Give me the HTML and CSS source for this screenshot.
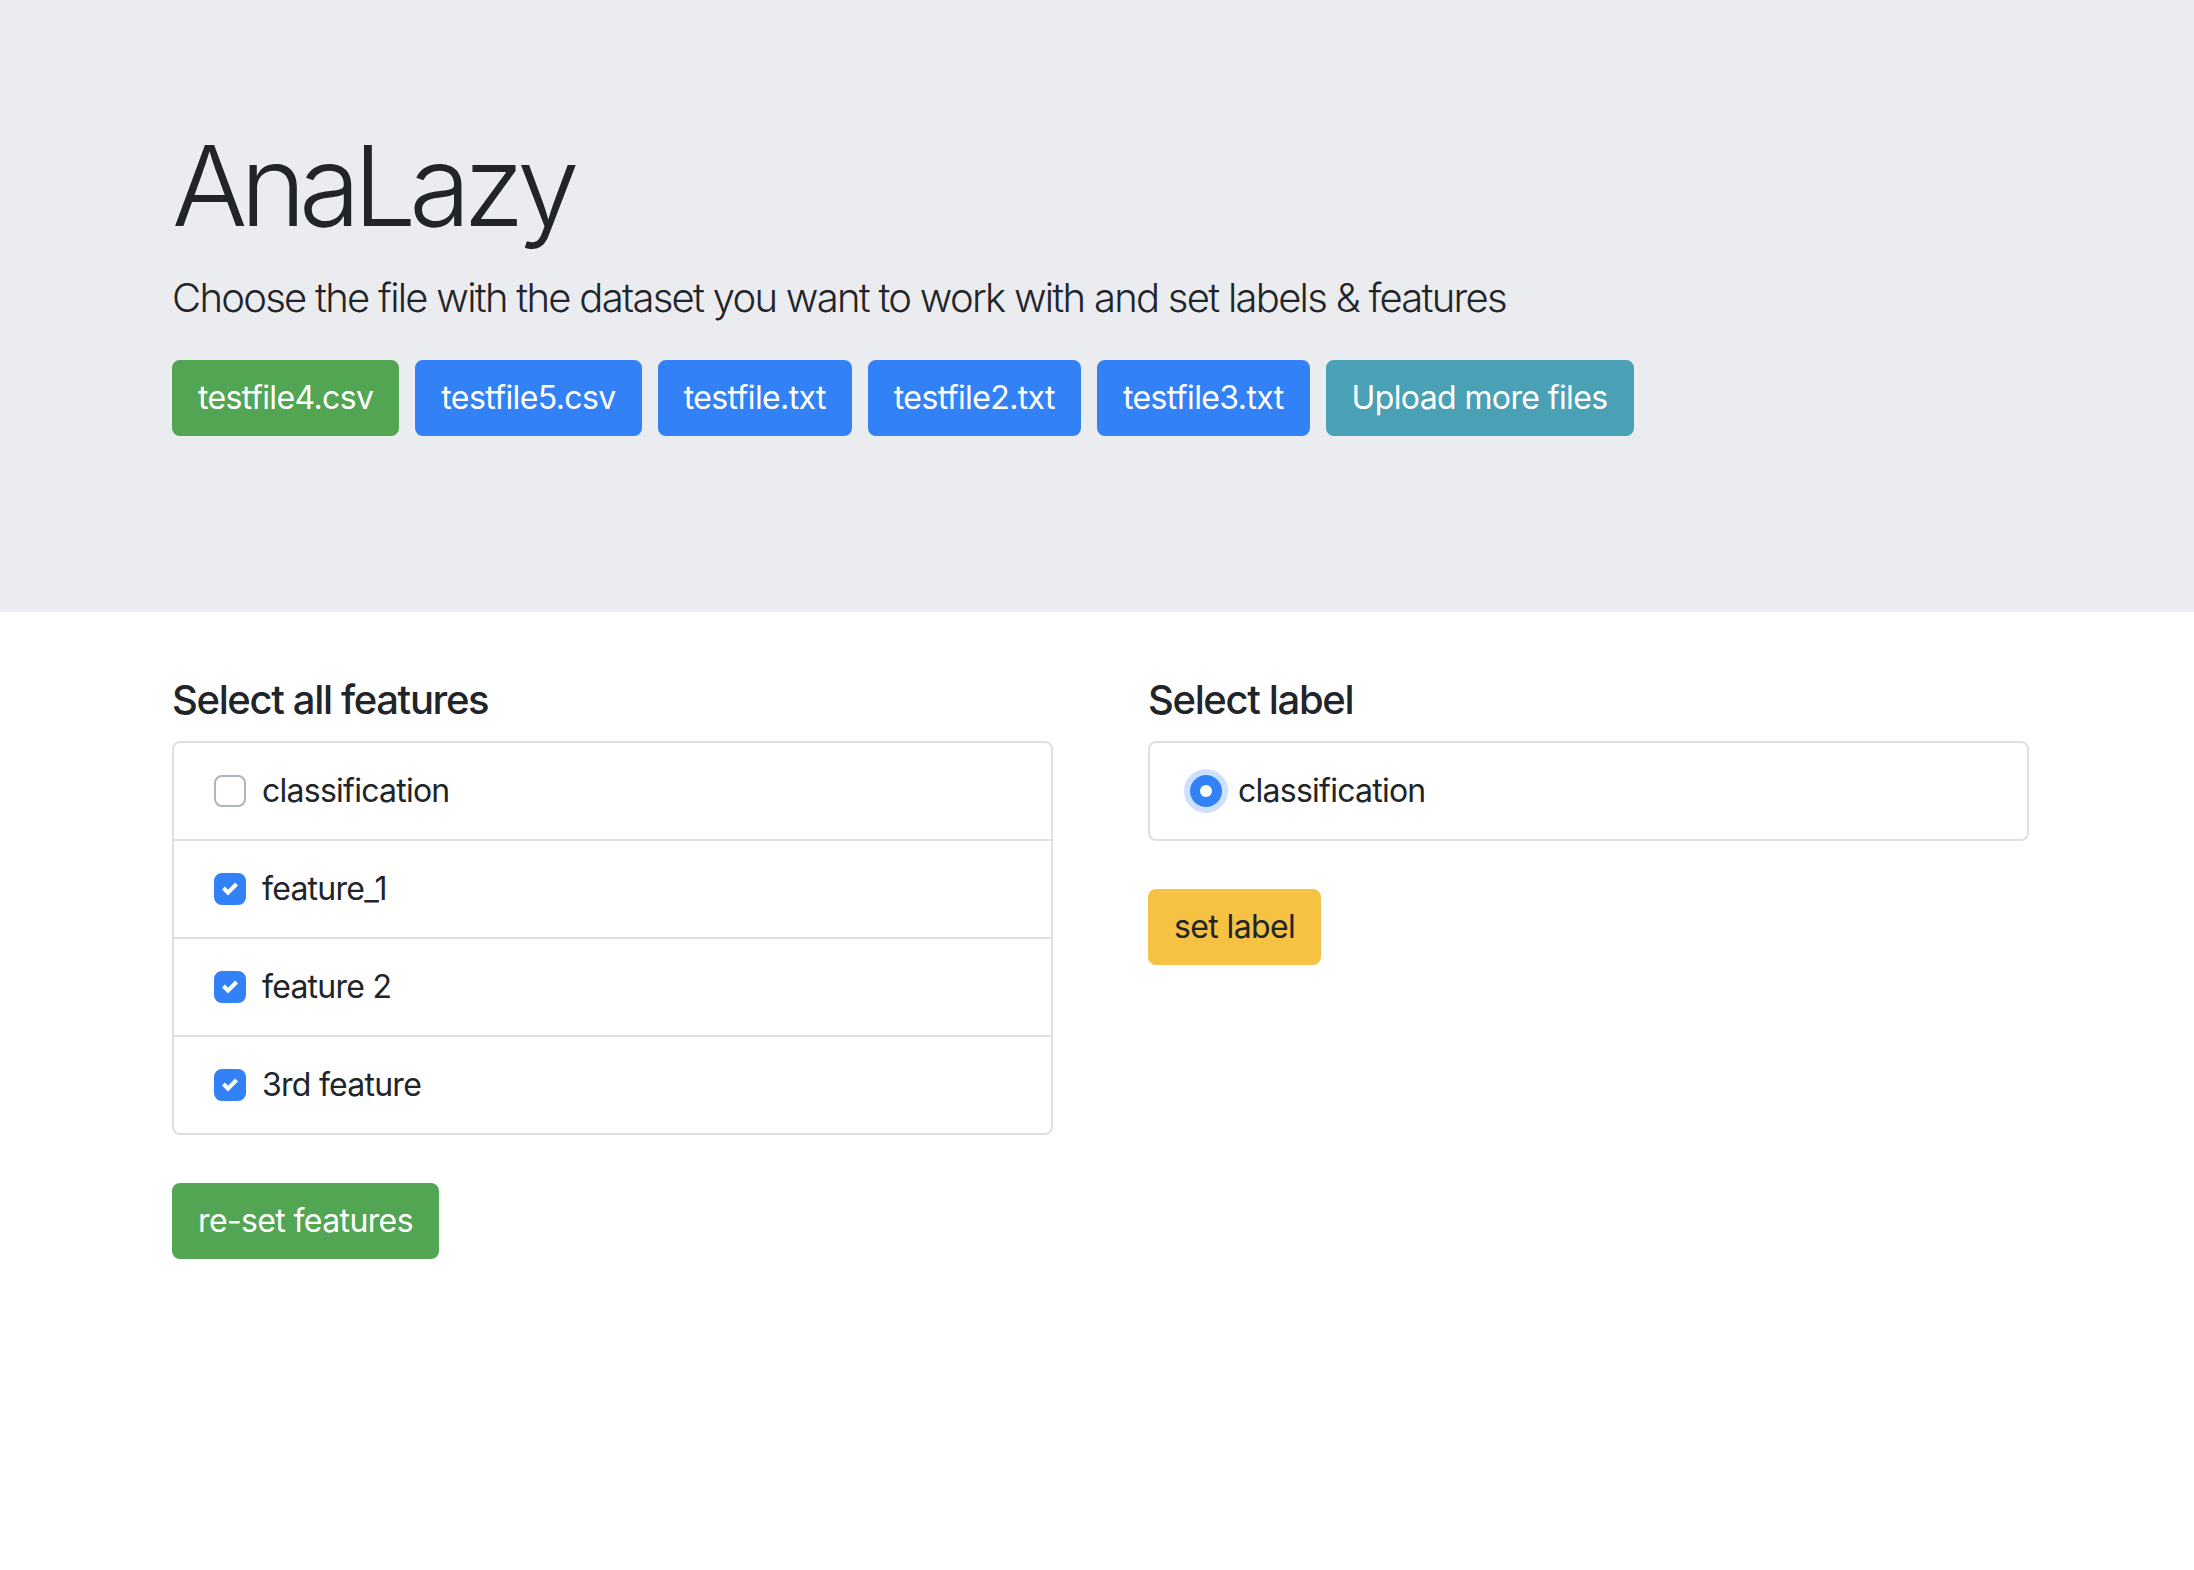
FILE: index.html
```html
<!DOCTYPE html>
<html lang="en">
<head>
<meta charset="utf-8">
<title>AnaLazy</title>
<link rel="stylesheet" href="styles.css">
</head>
<body>
<header class="jumbotron">
  <div class="container">
    <h1 class="display">AnaLazy</h1>
    <p class="lead">Choose the file with the dataset you want to work with and set labels &amp; features</p>
    <div class="file-buttons">
      <button class="btn btn-success">testfile4.csv</button>
      <button class="btn btn-primary">testfile5.csv</button>
      <button class="btn btn-primary">testfile.txt</button>
      <button class="btn btn-primary">testfile2.txt</button>
      <button class="btn btn-primary">testfile3.txt</button>
      <button class="btn btn-info">Upload more files</button>
    </div>
  </div>
</header>
<main class="container">
  <div class="columns">
    <section class="col">
      <h5 class="section-title">Select all features</h5>
      <ul class="list-group">
        <li class="list-item">
          <label class="control"><span class="checkbox"></span><span>classification</span></label>
        </li>
        <li class="list-item">
          <label class="control"><span class="checkbox checked"><svg viewBox="0 0 8 8" width="16" height="16"><path fill="#fff" d="M6.564.75l-3.59 3.612-1.538-1.55L0 4.26 2.974 7.25 8 2.193z"/></svg></span><span>feature_1</span></label>
        </li>
        <li class="list-item">
          <label class="control"><span class="checkbox checked"><svg viewBox="0 0 8 8" width="16" height="16"><path fill="#fff" d="M6.564.75l-3.59 3.612-1.538-1.55L0 4.26 2.974 7.25 8 2.193z"/></svg></span><span>feature 2</span></label>
        </li>
        <li class="list-item">
          <label class="control"><span class="checkbox checked"><svg viewBox="0 0 8 8" width="16" height="16"><path fill="#fff" d="M6.564.75l-3.59 3.612-1.538-1.55L0 4.26 2.974 7.25 8 2.193z"/></svg></span><span>3rd feature</span></label>
        </li>
      </ul>
      <button class="btn btn-success">re-set features</button>
    </section>
    <section class="col">
      <h5 class="section-title">Select label</h5>
      <ul class="list-group">
        <li class="list-item">
          <label class="control"><span class="radio"><span class="dot"></span></span><span>classification</span></label>
        </li>
      </ul>
      <button class="btn btn-warning">set label</button>
    </section>
  </div>
</main>
</body>
</html>
```
FILE: styles.css
```css
* {
  box-sizing: border-box;
}

html, body {
  margin: 0;
  padding: 0;
  background: #ffffff;
}

body {
  font-family: Inter, "Noto Sans", "Liberation Sans", sans-serif;
  font-size: 32px;
  line-height: 48px;
  letter-spacing: -0.75px;
  color: #212529;
}

.container {
  width: 1850px;
  margin: 0 auto;
}

.jumbotron {
  background: #ebecf0;
  padding: 118px 0 176px;
  margin-bottom: 64px;
}

.display {
  font-size: 112px;
  font-weight: 300;
  line-height: 134px;
  margin: 0 0 16px;
  letter-spacing: -7.2px;
}

.lead {
  font-size: 40px;
  font-weight: 300;
  line-height: 60px;
  margin: 0 0 32px;
  letter-spacing: -1.73px;
}

.file-buttons {
  display: flex;
  gap: 16px;
}

.btn {
  font-family: inherit;
  font-size: 32px;
  line-height: 48px;
  font-weight: 400;
  letter-spacing: -0.62px;
  padding: 12px 24px;
  border: 2px solid transparent;
  border-radius: 8px;
  color: #ffffff;
  cursor: pointer;
}

.btn-success {
  background: #52a552;
  border-color: #52a552;
}

.btn-primary {
  background: #3381f6;
  border-color: #3381f6;
}

.btn-info {
  background: #4aa1b5;
  border-color: #4aa1b5;
}

.btn-warning {
  background: #f5c243;
  border-color: #f5c243;
  color: #212529;
}

.columns {
  display: grid;
  grid-template-columns: 881px 881px;
  column-gap: 95px;
  align-items: start;
}

.col {
  display: flex;
  flex-direction: column;
  align-items: flex-start;
}

.section-title {
  font-size: 40px;
  font-weight: 500;
  line-height: 48px;
  letter-spacing: -1.35px;
  margin: 0 0 17px;
}

.list-group {
  list-style: none;
  margin: 0 0 48px;
  padding: 0;
  width: 100%;
  border: 2px solid #dfdfdf;
  border-radius: 8px;
}

.list-item {
  padding: 24px 40px;
  border-top: 2px solid #dfdfdf;
}

.list-item:first-child {
  border-top: none;
}

.control {
  display: flex;
  align-items: center;
  gap: 16px;
}

.checkbox {
  width: 32px;
  height: 32px;
  border: 2px solid #adb5bd;
  border-radius: 8px;
  background: #ffffff;
  display: flex;
  align-items: center;
  justify-content: center;
  flex: none;
}

.checkbox.checked {
  background: #3381f6;
  border-color: #3381f6;
}

.radio {
  width: 32px;
  height: 32px;
  border-radius: 50%;
  background: #3381f6;
  box-shadow: 0 0 0 6px #cde0fd;
  display: flex;
  align-items: center;
  justify-content: center;
  flex: none;
}

.dot {
  width: 12px;
  height: 12px;
  border-radius: 50%;
  background: #ffffff;
}
```
